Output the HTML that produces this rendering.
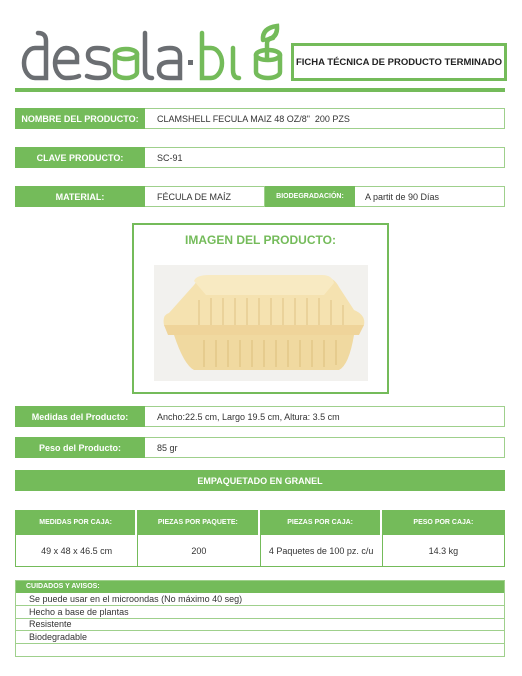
<!DOCTYPE html>
<html><head><meta charset="utf-8"><style>
*{margin:0;padding:0;box-sizing:border-box}
body{width:522px;height:676px;background:#fff;font-family:"Liberation Sans",sans-serif;position:relative;overflow:hidden;color:#333}
.a{position:absolute}
.g{background:#74bb5a;color:#fff;font-weight:bold;display:flex;align-items:center;justify-content:center}
.v{border:1.5px solid #9fd08c;border-left:none;background:#fff;font-size:9px;display:flex;align-items:center;padding-left:12px;color:#333}
.row{position:absolute;left:15px;width:490px;display:flex}
.h{border-right:2px solid #fff}
</style></head><body>
<svg class="a" style="left:0;top:0" width="290" height="95" viewBox="0 0 290 95" fill="none" stroke-width="4.5" stroke-linecap="round">
<g stroke="#6b6e72">
<path d="M38 33 Q46 33 46 41 V78 H35 A11 15 0 0 1 35 48 H46"/>
<path d="M79 76 Q75 78 66 78 A11 15 0 0 1 66 48 A11 9 0 0 1 77 58 V62 H56"/>
<path d="M108 50 Q104 48 97 48 Q88 48 88 55 Q88 62 98 63 Q109 64 109 71 Q109 78 98 78 Q92 78 87 76"/>
<path d="M145 33 V70 Q145 78 152 78"/>
<path d="M160 50 Q164 48 170 48 Q180 48 180 56 V78 H170 Q159 78 159 70 Q159 62 170 62 H180"/>
</g>
<g stroke="#74bb5a">
<path d="M115 54 A11 5 0 0 1 137 54 V72 A11 6 0 0 1 115 72 Z"/>
<path d="M115 54 A11 5 0 0 0 137 54"/>
<path d="M202 33 V78 H211 A11 15 0 0 0 211 48 H202"/>
<path d="M233 48 V70 Q233 78 239 78"/>
<path d="M256 55 A12 5 0 0 1 280 55 V72 A12 6 0 0 1 256 72 Z"/>
<path d="M256 55 A12 5 0 0 0 280 55"/>
<path d="M267 58 V44 Q267 38 273 38"/>
<path d="M263 40 Q262 28 277 26 Q278 38 266 40"/>
</g>
<rect x="188" y="60" width="5" height="5" fill="#6b6e72" stroke="none"/>
</svg>
<div class="a" style="left:291px;top:43px;width:216px;height:38px;border:3px solid #74bb5a;font-size:9.5px;font-weight:bold;display:flex;align-items:center;justify-content:center;color:#222">FICHA TÉCNICA DE PRODUCTO TERMINADO</div>
<div class="a" style="left:15px;top:88px;width:490px;height:4px;background:#74bb5a"></div>

<div class="row" style="top:108px;height:21px"><div class="g" style="width:130px;font-size:9px">NOMBRE DEL PRODUCTO:</div><div class="v" style="flex:1">CLAMSHELL FECULA MAIZ 48 OZ/8"&nbsp; 200 PZS</div></div>
<div class="row" style="top:147px;height:21px"><div class="g" style="width:130px;font-size:9px">CLAVE PRODUCTO:</div><div class="v" style="flex:1">SC-91</div></div>
<div class="row" style="top:186px;height:21px"><div class="g" style="width:130px;font-size:9px">MATERIAL:</div><div class="v" style="width:120px">FÉCULA DE MAÍZ</div><div class="g" style="width:90px;font-size:7px">BIODEGRADACIÓN:</div><div class="v" style="flex:1;padding-left:10px">A partit de 90 Días</div></div>

<div class="a" style="left:132px;top:223px;width:257px;height:171px;border:2px solid #74bb5a"></div>
<div class="a" style="left:132px;top:233px;width:257px;text-align:center;color:#74bb5a;font-weight:bold;font-size:12px">IMAGEN DEL PRODUCTO:</div>
<svg class="a" style="left:154px;top:265px" width="214" height="116" viewBox="0 0 214 116">
<rect width="214" height="116" fill="#f2f1ee"/>
<path d="M20 70 Q30 100 40 105 H185 Q195 100 200 70 Z" fill="#f0d9a0"/>
<g stroke="#e2c888" stroke-width="1.5"><path d="M50 75V102M62 75V102M74 75V102M86 75V102M98 75V102M110 75V102M122 75V102M134 75V102M146 75V102M158 75V102M170 75V102M182 75V100"/></g>
<path d="M10 60 Q8 50 15 48 L40 20 Q45 12 60 12 H170 Q180 12 185 22 L200 45 Q212 50 210 60 L205 68 H14 Z" fill="#f5e2b0"/>
<g stroke="#e6cd93" stroke-width="1.5"><path d="M45 35V62M57 33V62M69 33V62M81 33V62M93 33V62M105 33V62M117 33V62M129 33V62M141 33V62M153 33V62M165 33V62M177 35V62M189 40V62"/></g>
<path d="M40 16 Q42 10 55 10 H168 Q178 10 180 18 L170 30 H52 Z" fill="#f8eac2"/>
<path d="M10 60 H210 L205 70 H14 Z" fill="#efd49a"/>
</svg>

<div class="row" style="top:406px;height:21px"><div class="g" style="width:130px;font-size:9px">Medidas del Producto:</div><div class="v" style="flex:1">Ancho:22.5 cm, Largo 19.5 cm, Altura: 3.5 cm</div></div>
<div class="row" style="top:437px;height:21px"><div class="g" style="width:130px;font-size:9px">Peso del Producto:</div><div class="v" style="flex:1">85 gr</div></div>
<div class="a g" style="left:15px;top:470px;width:490px;height:21px;font-size:9px">EMPAQUETADO EN GRANEL</div>

<div class="a" style="left:15px;top:510px;width:490px;height:57px;background:#74bb5a;display:grid;grid-template-columns:repeat(4,1fr);grid-template-rows:25px 1fr;gap:0 1px;padding:0 1px 1px">
<div class="g h" style="font-size:7px">MEDIDAS POR CAJA:</div><div class="g h" style="font-size:7px">PIEZAS POR PAQUETE:</div><div class="g h" style="font-size:7px">PIEZAS POR CAJA:</div><div class="g" style="font-size:7px">PESO POR CAJA:</div>
<div style="background:#fff;display:flex;align-items:center;justify-content:center;font-size:9px">49 x 48 x 46.5 cm</div>
<div style="background:#fff;display:flex;align-items:center;justify-content:center;font-size:9px">200</div>
<div style="background:#fff;display:flex;align-items:center;justify-content:center;font-size:9px">4 Paquetes de 100 pz. c/u</div>
<div style="background:#fff;display:flex;align-items:center;justify-content:center;font-size:9px">14.3 kg</div>
</div>

<div class="a" style="left:15px;top:580px;width:490px;height:77px;border:1.5px solid #9fd08c;font-size:9px">
<div style="background:#74bb5a;color:#fff;font-weight:bold;font-size:7px;height:12px;line-height:12px;padding-left:10px">CUIDADOS Y AVISOS:</div>
<div style="height:13px;line-height:12px;padding-left:13px;border-bottom:1.5px solid #9fd08c">Se puede usar en el microondas (No máximo 40 seg)</div>
<div style="height:13px;line-height:12px;padding-left:13px;border-bottom:1.5px solid #9fd08c">Hecho a base de plantas</div>
<div style="height:12px;line-height:11px;padding-left:13px;border-bottom:1.5px solid #9fd08c">Resistente</div>
<div style="height:13px;line-height:12px;padding-left:13px;border-bottom:1.5px solid #9fd08c">Biodegradable</div>
</div>
</body></html>
